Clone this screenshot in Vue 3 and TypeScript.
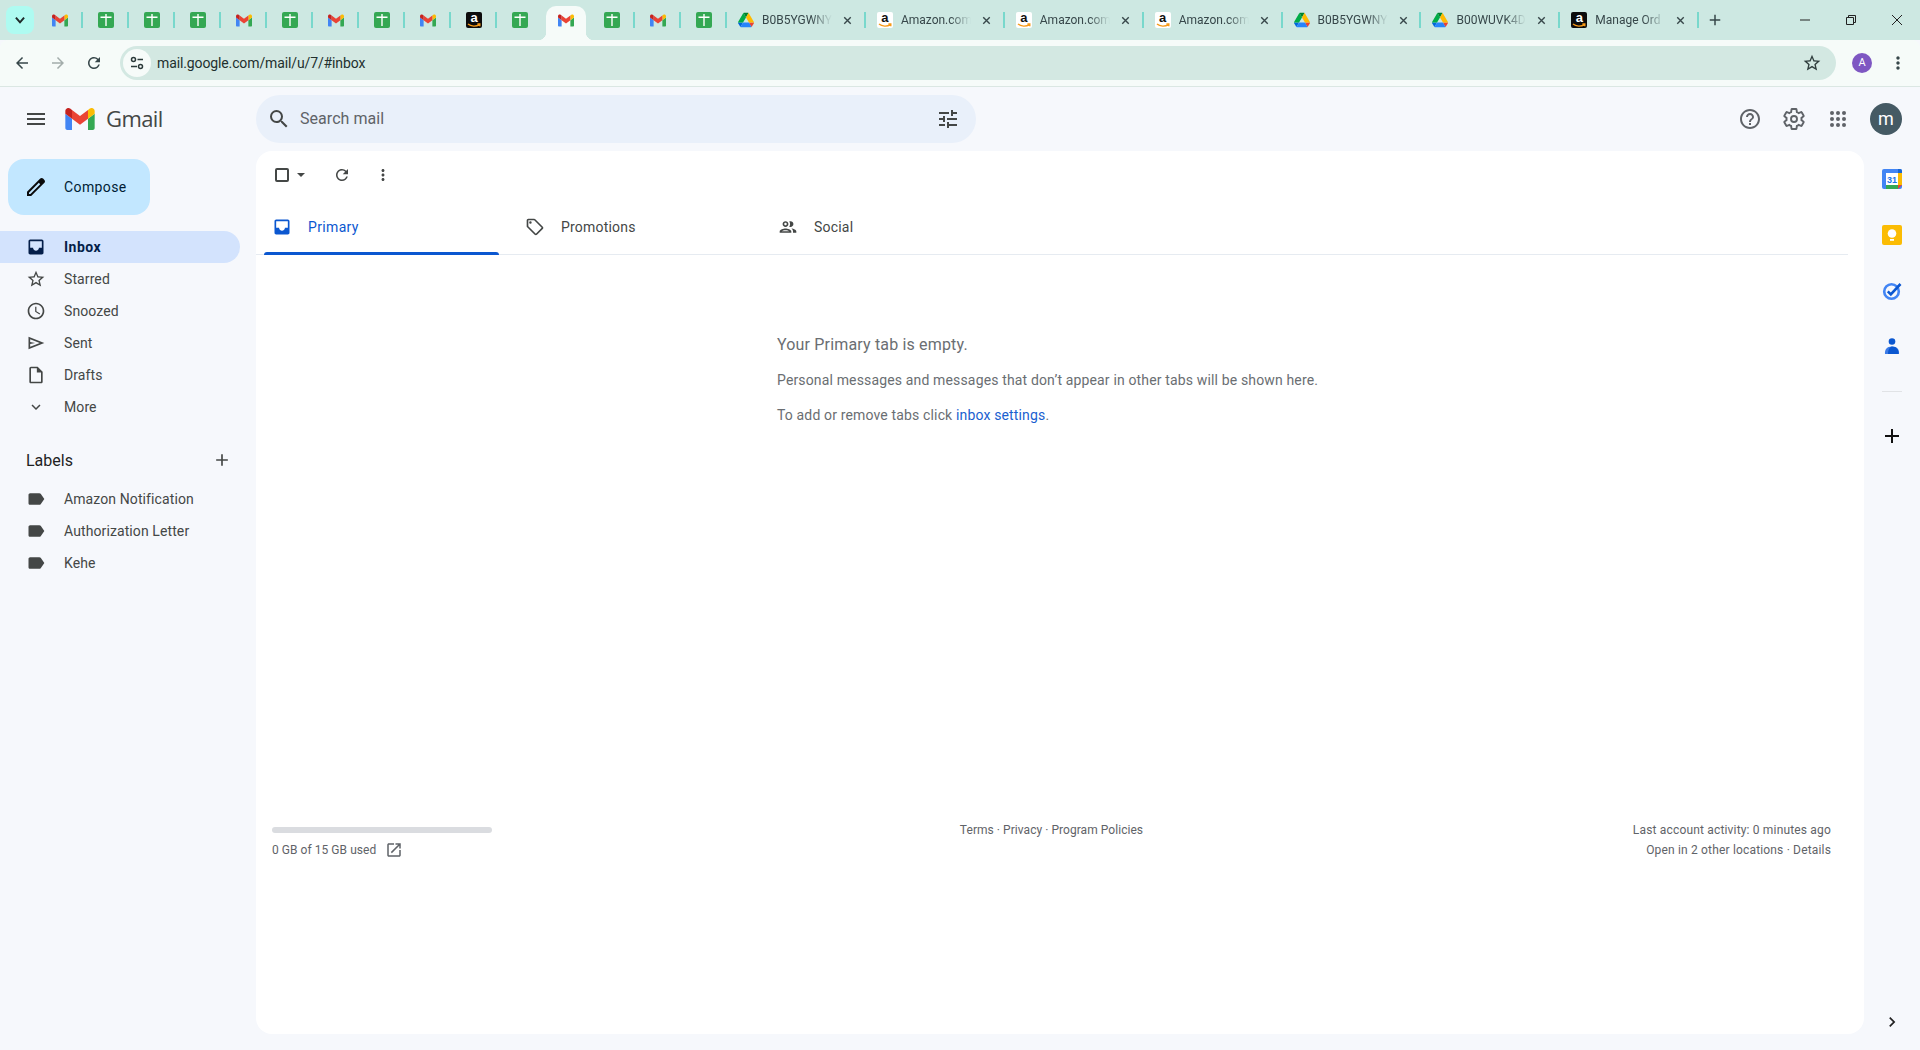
<script setup lang="ts">
interface TabItem {
  kind: string
  title?: string
  active?: boolean
}

const smallTabs: TabItem[] = [
  { kind: 'gmail' }, { kind: 'sheets' }, { kind: 'sheets' }, { kind: 'sheets' }, { kind: 'gmail' },
  { kind: 'sheets' }, { kind: 'gmail' }, { kind: 'sheets' }, { kind: 'gmail' }, { kind: 'amazonDark' },
  { kind: 'sheets' }, { kind: 'gmail', active: true }, { kind: 'sheets' }, { kind: 'gmail' }, { kind: 'sheets' },
]
const wideTabs: TabItem[] = [
  { kind: 'drive', title: 'B0B5YGWNY' },
  { kind: 'amazonLight', title: 'Amazon.com' },
  { kind: 'amazonLight', title: 'Amazon.com' },
  { kind: 'amazonLight', title: 'Amazon.com' },
  { kind: 'drive', title: 'B0B5YGWNY' },
  { kind: 'drive', title: 'B00WUVK4D' },
  { kind: 'amazonDark', title: 'Manage Ord' },
]

const inboxPath = 'M19 3H5c-1.1 0-2 .9-2 2v14c0 1.1.9 2 2 2h14c1.1 0 2-.9 2-2V5c0-1.1-.9-2-2-2zm0 10h-3.500c0 2-1.600 3.500-3.500 3.500s-3.500-1.500-3.500-3.500H5V5h14z'

const navItems = [
  { label: 'Inbox', active: true, path: inboxPath },
  { label: 'Starred', path: 'M22 9.24l-7.19-.62L12 2 9.19 8.63 2 9.24l5.46 4.73L5.82 21 12 17.27 18.18 21l-1.63-7.03L22 9.24zM12 15.4l-3.76 2.27 1-4.28-3.32-2.88 4.38-.38L12 6.1l1.71 4.04 4.38.38-3.32 2.88 1 4.28L12 15.4z' },
  { label: 'Snoozed', path: 'M11.99 2C6.47 2 2 6.48 2 12s4.47 10 9.99 10C17.52 22 22 17.52 22 12S17.52 2 11.99 2zM12 20c-4.42 0-8-3.58-8-8s3.58-8 8-8 8 3.58 8 8-3.58 8-8 8zm.5-13H11v6l5.25 3.15.75-1.23-4.5-2.67V7z' },
  { label: 'Sent', path: 'M3 4.5v15L22 12 3 4.5zm2 3l11.5 4.5L5 16.5v-3.2l6-1.3-6-1.3V7.5z' },
  { label: 'Drafts', path: 'M14 2H6c-1.1 0-2 .9-2 2v16c0 1.1.9 2 2 2h12c1.1 0 2-.9 2-2V8l-6-6zm4 18H6V4h7v5h5v11z' },
  { label: 'More', path: 'M7.41 8.59L12 13.17l4.59-4.58L18 10l-6 6-6-6 1.41-1.41z' },
]
const labels = ['Amazon Notification', 'Authorization Letter', 'Kehe']

const gearPath = 'M19.43 12.98c.04-.32.07-.64.07-.98s-.03-.66-.07-.98l2.11-1.65c.19-.15.24-.42.12-.64l-2-3.46c-.12-.22-.39-.3-.61-.22l-2.49 1c-.52-.4-1.08-.73-1.69-.98l-.38-2.65C14.46 2.18 14.25 2 14 2h-4c-.25 0-.46.18-.49.42l-.38 2.65c-.61.25-1.17.59-1.69.98l-2.49-1c-.23-.09-.49 0-.61.22l-2 3.46c-.13.22-.07.49.12.64l2.11 1.65c-.04.32-.07.65-.07.98s.03.66.07.98l-2.11 1.65c-.19.15-.24.42-.12.64l2 3.46c.12.22.39.3.61.22l2.49-1c.52.4 1.08.73 1.69.98l.38 2.65c.03.24.24.42.49.42h4c.25 0 .46-.18.49-.42l.38-2.65c.61-.25 1.17-.59 1.69-.98l2.49 1c.23.09.49 0 .61-.22l2-3.46c.12-.22.07-.49-.12-.64l-2.11-1.65z'
const helpPath = 'M11 18h2v-2h-2v2zm1-16C6.48 2 2 6.48 2 12s4.48 10 10 10 10-4.48 10-10S17.52 2 12 2zm0 18c-4.41 0-8-3.59-8-8s3.59-8 8-8 8 3.59 8 8-3.59 8-8 8zm0-14c-2.21 0-4 1.79-4 4h2c0-1.1.9-2 2-2s2 .9 2 2c0 2-3 1.75-3 5h2c0-2.25 3-2.5 3-5 0-2.21-1.79-4-4-4z'
const gridDots = [6, 12, 18].flatMap((y) => [6, 12, 18].map((x) => ({ x, y })))

const mailTabs = [
  { label: 'Primary', active: true, path: inboxPath },
  { label: 'Promotions', path: 'M21.41 11.58l-9-9C12.05 2.22 11.55 2 11 2H4c-1.1 0-2 .9-2 2v7c0 .55.22 1.05.59 1.42l9 9c.36.36.86.58 1.41.58s1.05-.22 1.41-.59l7-7c.37-.36.59-.86.59-1.41s-.23-1.06-.59-1.42zM13 20.01L4 11V4h7v-.01l9 9-7 7.02zM6.5 5A1.5 1.5 0 1 0 6.5 8 1.5 1.5 0 0 0 6.5 5z' },
  { label: 'Social', path: 'M9 13.75c-2.34 0-7 1.17-7 3.5V19h14v-1.75c0-2.33-4.66-3.5-7-3.5zM4.34 17c.84-.58 2.87-1.25 4.66-1.25s3.82.67 4.66 1.25H4.34zM9 12c1.93 0 3.5-1.57 3.5-3.5S10.93 5 9 5 5.5 6.57 5.5 8.5 7.07 12 9 12zm0-5c.83 0 1.5.67 1.5 1.5S9.83 10 9 10s-1.5-.67-1.5-1.5S8.17 7 9 7zm7.04 6.81c1.16.84 1.96 1.96 1.96 3.44V19h4v-1.75c0-2.02-3.5-3.17-5.96-3.44zM15 12c1.93 0 3.5-1.57 3.5-3.5S16.93 5 15 5c-.54 0-1.04.13-1.5.35.63.89 1 1.98 1 3.15s-.37 2.26-1 3.15c.46.22.96.35 1.5.35z' },
]

const refreshPath = 'M17.65 6.35A7.958 7.958 0 0 0 12 4c-4.42 0-7.99 3.58-7.99 8s3.57 8 7.99 8c3.73 0 6.84-2.55 7.73-6h-2.08A5.99 5.99 0 0 1 12 18c-3.31 0-6-2.69-6-6s2.69-6 6-6c1.66 0 3.14.69 4.22 1.78L13 11h7V4l-2.35 2.35z'
const dotsPath = 'M12 8c1.1 0 2-.9 2-2s-.9-2-2-2-2 .9-2 2 .9 2 2 2zm0 2c-1.1 0-2 .9-2 2s.9 2 2 2 2-.9 2-2-.9-2-2-2zm0 6c-1.1 0-2 .9-2 2s.9 2 2 2 2-.9 2-2-.9-2-2-2z'
const plusPath = 'M19 13h-6v6h-2v-6H5v-2h6V5h2v6h6v2z'
</script>

<template>
  <div class="page">
    <header class="strip">
      <button class="collapse" aria-label="Search tabs">
        <svg width="14" height="14" viewBox="0 0 24 24"><path d="M5 8l7 8 7-8" fill="none" stroke="#1f2a2a" stroke-width="3.4" /></svg>
      </button>
      <div class="tabs">
        <div v-for="(t, i) in [...smallTabs, ...wideTabs]" :key="i" class="tab" :class="{ wide: t.title, active: t.active }">
          <svg v-if="t.kind === 'gmail'" class="fav gm" viewBox="52 42 88 66">
            <path fill="#4285f4" d="M58 108h14V74L52 59v43c0 3.32 2.69 6 6 6" />
            <path fill="#34a853" d="M120 108h14c3.32 0 6-2.69 6-6V59l-20 15" />
            <path fill="#fbbc04" d="M120 48v26l20-15v-8c0-7.42-8.47-11.65-14.4-7.2" />
            <path fill="#ea4335" d="M72 74V48l24 18 24-18v26L96 92" />
            <path fill="#c5221f" d="M52 51v8l20 15V48l-5.6-4.2c-5.94-4.45-14.4-.22-14.4 7.2" />
          </svg>
          <svg v-else-if="t.kind === 'sheets'" class="fav" viewBox="0 0 16 16">
            <rect width="16" height="16" rx="2" fill="#34a853" />
            <path d="M7.3 2h1.400v2.600h4.800V6H8.700v8H7.300V6H2.500V4.600h4.800z" fill="#fff" />
          </svg>
          <svg v-else-if="t.kind === 'drive'" class="fav" viewBox="0 0 87.3 78">
            <path fill="#0066da" d="m6.6 66.85 3.85 6.65c.8 1.4 1.95 2.5 3.3 3.3l13.75-23.8h-27.5c0 1.55.4 3.1 1.2 4.5z" />
            <path fill="#00ac47" d="m43.65 25-13.75-23.8c-1.35.8-2.5 1.9-3.3 3.3l-25.4 44a9.06 9.06 0 0 0 -1.2 4.5h27.5z" />
            <path fill="#ea4335" d="m73.55 76.8c1.35-.8 2.5-1.9 3.3-3.3l1.6-2.75 7.65-13.25c.8-1.4 1.2-2.95 1.2-4.5h-27.502l5.852 11.5z" />
            <path fill="#00832d" d="m43.65 25 13.75-23.8c-1.35-.8-2.9-1.2-4.5-1.2h-18.5c-1.6 0-3.15.45-4.5 1.2z" />
            <path fill="#2684fc" d="m59.8 53h-32.3l-13.75 23.8c1.35.8 2.9 1.2 4.5 1.2h50.8c1.6 0 3.15-.45 4.5-1.2z" />
            <path fill="#ffba00" d="m73.4 26.5-12.7-22c-.8-1.4-1.95-2.5-3.3-3.3l-13.75 23.8 16.15 28h27.45c0-1.55-.4-3.1-1.2-4.5z" />
          </svg>
          <span v-else class="amz" :class="t.kind">
            <span class="amz-a">a</span>
            <svg class="smile" viewBox="0 0 14 5"><path d="M1 1c3 2.6 8 2.8 11.5.6M10.4 1h2.4v2.2" fill="none" stroke="#f79a17" stroke-width="1.4" /></svg>
          </span>
          <template v-if="t.title">
            <span class="tab-title">{{ t.title }}</span>
            <svg class="tab-x" viewBox="0 0 24 24"><path d="M6 6l12 12M18 6L6 18" stroke="#37474a" stroke-width="2.6" /></svg>
          </template>
        </div>
      </div>
      <svg class="newtab" viewBox="0 0 24 24"><path :d="plusPath" fill="#37474a" /></svg>
      <div class="winctl">
        <svg viewBox="0 0 12 12"><path d="M1 6h10" stroke="#222" stroke-width="1" /></svg>
        <svg viewBox="0 0 12 12"><path d="M1.5 3.500h7v7h-7zM3.500 3.500v-2h7v7h-2" fill="none" stroke="#222" stroke-width="1" /></svg>
        <svg viewBox="0 0 12 12"><path d="M1 1l10 10M11 1L1 11" stroke="#222" stroke-width="1" /></svg>
      </div>
    </header>

    <nav class="toolbar">
      <svg class="tb-ic back" viewBox="0 0 24 24"><path d="M20 11H7.83l5.59-5.59L12 4l-8 8 8 8 1.41-1.41L7.83 13H20v-2z" fill="#37474a" /></svg>
      <svg class="tb-ic fwd" viewBox="0 0 24 24"><path d="M12 4l-1.41 1.41L16.17 11H4v2h12.17l-5.58 5.59L12 20l8-8z" fill="#a3adab" /></svg>
      <svg class="tb-ic reload" viewBox="0 0 24 24"><path :d="refreshPath" fill="#37474a" /></svg>
      <div class="omni">
        <span class="site">
          <svg viewBox="0 0 16 16" width="16" height="16">
            <circle cx="4.500" cy="4.500" r="2" fill="none" stroke="#2b3a3a" stroke-width="1.500" />
            <path d="M8.500 4.500H14M2 11.500h6" stroke="#2b3a3a" stroke-width="1.500" />
            <circle cx="11.500" cy="11.500" r="2" fill="none" stroke="#2b3a3a" stroke-width="1.500" />
          </svg>
        </span>
        <span class="url">mail.google.com/mail/u/7/#inbox</span>
        <svg class="star" viewBox="0 0 24 24"><path :d="navItems[1].path" fill="#2f3d3d" /></svg>
      </div>
      <span class="profile">A</span>
      <svg class="chrome-menu" viewBox="0 0 24 24"><path :d="dotsPath" fill="#37474a" /></svg>
    </nav>

    <div class="gmail">
      <div class="g-head">
        <div class="brand">
          <svg class="ham" viewBox="0 0 24 24"><path d="M3 18h18v-2H3v2zm0-5h18v-2H3v2zm0-7v2h18V6H3z" fill="#444746" /></svg>
          <svg class="logo" viewBox="52 42 88 66">
            <path fill="#4285f4" d="M58 108h14V74L52 59v43c0 3.32 2.69 6 6 6" />
            <path fill="#34a853" d="M120 108h14c3.32 0 6-2.69 6-6V59l-20 15" />
            <path fill="#fbbc04" d="M120 48v26l20-15v-8c0-7.42-8.47-11.65-14.4-7.2" />
            <path fill="#ea4335" d="M72 74V48l24 18 24-18v26L96 92" />
            <path fill="#c5221f" d="M52 51v8l20 15V48l-5.6-4.2c-5.94-4.45-14.4-.22-14.4 7.2" />
          </svg>
          <span class="wordmark">Gmail</span>
        </div>
        <div class="search">
          <svg class="s-ic" viewBox="0 0 24 24"><path d="M15.5 14h-.79l-.28-.27A6.471 6.471 0 0 0 16 9.5 6.5 6.5 0 1 0 9.5 16c1.61 0 3.09-.59 4.23-1.57l.27.28v.79l5 4.99L20.49 19l-4.99-5zm-6 0C7.01 14 5 11.99 5 9.5S7.01 5 9.5 5 14 7.01 14 9.5 11.99 14 9.5 14z" fill="#444746" /></svg>
          <span class="s-text">Search mail</span>
          <svg class="s-tune" viewBox="0 0 24 24"><path d="M3 17v2h6v-2H3zM3 5v2h10V5H3zm10 16v-2h8v-2h-8v-2h-2v6h2zM7 9v2H3v2h4v2h2V9H7zm14 4v-2H11v2h10zm-6-4h2V7h4V5h-4V3h-2v6z" fill="#444746" /></svg>
        </div>
        <div class="h-actions">
          <svg class="h-ic" viewBox="0 0 24 24"><path :d="helpPath" fill="#5f6368" /></svg>
          <svg class="h-ic" viewBox="0 0 24 24">
            <path :d="gearPath" fill="none" stroke="#5f6368" stroke-width="1.900" />
            <circle cx="12" cy="12" r="3" fill="none" stroke="#5f6368" stroke-width="1.900" />
          </svg>
          <svg class="h-ic" viewBox="0 0 24 24"><circle v-for="d in gridDots" :key="`${d.x}-${d.y}`" :cx="d.x" :cy="d.y" r="2" fill="#5f6368" /></svg>
          <span class="me">m</span>
        </div>
      </div>

      <div class="g-body">
        <aside class="side">
          <button class="compose">
            <svg viewBox="0 0 24 24" width="24" height="24"><path d="M20.41 4.94l-1.35-1.35c-.78-.78-2.05-.78-2.83 0L3 16.82V21h4.18L20.41 7.77c.79-.78.79-2.05 0-2.83zM6.41 19.06L5 19v-1.36l9.82-9.82 1.41 1.41-9.82 9.83z" fill="#0b0b0b" /></svg>
            <span>Compose</span>
          </button>
          <ul class="nav">
            <li v-for="n in navItems" :key="n.label" class="row" :class="{ on: n.active }">
              <svg viewBox="0 0 24 24" class="row-ic" :class="{ small: n.label === 'More' }"><path :d="n.path" :fill="n.active ? '#041e49' : '#444746'" /></svg>
              <span>{{ n.label }}</span>
            </li>
          </ul>
          <div class="lab-head">
            <span>Labels</span>
            <svg viewBox="0 0 24 24" width="20" height="20"><path :d="plusPath" fill="#444746" /></svg>
          </div>
          <ul class="nav">
            <li v-for="l in labels" :key="l" class="row">
              <svg viewBox="0 0 24 24" class="row-ic"><path d="M17.63 5.84C17.27 5.33 16.67 5 16 5L5 5.01C3.9 5.01 3 5.9 3 7v10c0 1.1.9 1.99 2 1.99L16 19c.67 0 1.27-.33 1.63-.84L22 12l-4.37-6.16z" fill="#444746" /></svg>
              <span>{{ l }}</span>
            </li>
          </ul>
        </aside>

        <main class="card">
          <div class="actions">
            <span class="check"></span>
            <svg class="caret" viewBox="0 0 10 5"><path d="M0 0h10L5 5z" fill="#444746" /></svg>
            <svg class="act refresh" viewBox="0 0 24 24"><path :d="refreshPath" fill="#444746" /></svg>
            <svg class="act more" viewBox="0 0 24 24"><path :d="dotsPath" fill="#444746" /></svg>
          </div>
          <div class="mtabs">
            <div v-for="t in mailTabs" :key="t.label" class="mtab" :class="{ on: t.active }">
              <svg viewBox="0 0 24 24" class="mtab-ic"><path :d="t.path" :fill="t.active ? '#0b57d0' : '#444746'" /></svg>
              <span>{{ t.label }}</span>
            </div>
          </div>
          <section class="empty">
            <h2>Your Primary tab is empty.</h2>
            <p>Personal messages and messages that don’t appear in other tabs will be shown here.</p>
            <p>To add or remove tabs click <a>inbox settings</a>.</p>
          </section>
          <footer class="foot">
            <div class="usage">
              <div class="bar"></div>
              <div class="used">
                <span>0 GB of 15 GB used</span>
                <svg viewBox="0 0 24 24" width="18" height="18"><path d="M19 19H5V5h7V3H5c-1.11 0-2 .9-2 2v14c0 1.1.89 2 2 2h14c1.1 0 2-.9 2-2v-7h-2v7zM14 3v2h3.59l-9.83 9.83 1.41 1.41L19 6.41V10h2V3h-7z" fill="#5f6368" /></svg>
              </div>
            </div>
            <div class="links">Terms · Privacy · Program Policies</div>
            <div class="activity">
              <div>Last account activity: 0 minutes ago</div>
              <div>Open in 2 other locations · Details</div>
            </div>
          </footer>
        </main>

        <aside class="rail">
          <div class="rail-top">
            <svg class="rail-ic" viewBox="0 0 20 20">
              <rect width="20" height="20" rx="2" fill="#4285f4" />
              <rect x="4" y="4" width="12" height="12" fill="#fff" />
              <path d="M16 4h4v12h-4z" fill="#fbbc04" />
              <path d="M4 16h12v4H4z" fill="#34a853" />
              <path d="M16 16h4l-4 4z" fill="#ea4335" />
              <path d="M16 0h2a2 2 0 0 1 2 2v2h-4z" fill="#1967d2" />
              <text x="10" y="13.500" class="cal-num">31</text>
            </svg>
            <svg class="rail-ic" viewBox="0 0 20 20">
              <rect width="20" height="20" rx="2" fill="#fbbc04" />
              <circle cx="10" cy="8.500" r="4.300" fill="#fff" />
              <rect x="8" y="14" width="4" height="1.800" fill="#fff" />
            </svg>
            <svg class="rail-ic" viewBox="0 0 20 20">
              <circle cx="9.500" cy="10.500" r="7.300" fill="none" stroke="#4285f4" stroke-width="2.600" />
              <path d="M5.800 10.400l3 3L18.500 3" fill="none" stroke="#0b57d0" stroke-width="2.600" />
            </svg>
            <svg class="rail-ic" viewBox="0 0 20 20">
              <circle cx="10" cy="4.500" r="3.300" fill="#0b57d0" />
              <path d="M3 17c-.500-4 1.500-7.500 7-7.500s7.500 3.500 7 7.500z" fill="#3c7be6" />
              <path d="M6 17c0-4 1.500-7 4-7.500 4.500 0 7 3.500 6.500 7.500z" fill="#0b57d0" />
            </svg>
            <div class="rail-sep"></div>
            <svg class="rail-plus" viewBox="0 0 24 24"><path :d="plusPath" fill="#111" /></svg>
          </div>
          <svg class="rail-chev" viewBox="0 0 24 24"><path d="M8.590 16.590L13.170 12 8.590 7.410 10 6l6 6-6 6z" fill="#222" /></svg>
        </aside>
      </div>
    </div>
  </div>
</template>

<style>
html, body { margin: 0; background: #f6f8fc; }
</style>

<style scoped>
.page {
  width: 1920px;
  height: 1050px;
  overflow: hidden;
  display: flex;
  flex-direction: column;
  font-family: Roboto, "Liberation Sans", sans-serif;
  color: #444746;
  background: #f6f8fc;
}
svg { display: block; flex: none; }
ul { list-style: none; margin: 0; padding: 0; }
button { border: 0; font: inherit; padding: 0; }

/* tab strip */
.strip { height: 40px; flex: none; background: #cde8e2; display: flex; align-items: flex-start; position: relative; }
.collapse { width: 28px; height: 28px; margin: 6px 3px 0 6px; border-radius: 8px; background: #aefbf1; display: flex; align-items: center; justify-content: center; }
.tabs { display: flex; height: 40px; }
.tab { width: 46px; height: 40px; box-sizing: border-box; display: flex; align-items: center; justify-content: center; position: relative; }
.tab::after { content: ""; position: absolute; right: 0; top: 12px; height: 16px; width: 2px; background: #78d8cc; }
.tab:nth-child(11)::after { display: none; }
.tab.active::before {
  content: "";
  position: absolute;
  left: 3px;
  right: 3px;
  top: 6px;
  bottom: 0;
  background: #f6fbf9;
  border-radius: 10px 10px 0 0;
}
.tab.active::after {
  left: -5px;
  right: -5px;
  top: auto;
  bottom: 0;
  width: auto;
  height: 8px;
  background:
    radial-gradient(circle at 0 0, transparent 8px, #f6fbf9 8.5px) left / 8px 8px no-repeat,
    radial-gradient(circle at 100% 0, transparent 8px, #f6fbf9 8.5px) right / 8px 8px no-repeat;
}
.tab.wide { width: 138.900px; justify-content: flex-start; padding-left: 11px; }
.fav { width: 16px; height: 16px; position: relative; z-index: 1; }
.fav.gm { height: 13px; }
.amz { width: 16px; height: 16px; position: relative; display: block; border-radius: 2px; }
.amazonDark { background: #0c0c0c; color: #fff; }
.amazonLight { background: #fff; color: #111; }
.amz-a { position: absolute; left: 0; right: 0; top: 0; text-align: center; font: 700 13px/12px "Liberation Sans", sans-serif; }
.smile { position: absolute; left: 1px; bottom: 0; width: 14px; height: 5px; }
.tab-title {
  margin-left: 8px;
  width: 70px;
  font-size: 12px;
  white-space: nowrap;
  color: #37474a;
  -webkit-mask-image: linear-gradient(90deg, #000 70%, transparent);
  mask-image: linear-gradient(90deg, #000 70%, transparent);
}
.tab-x { width: 13px; height: 13px; margin-left: 9px; }
.newtab { width: 18px; height: 18px; margin: 11px 0 0 7px; }
.winctl { margin-left: auto; display: flex; gap: 34px; padding: 14px 17px 0 0; }
.winctl svg { width: 12px; height: 12px; }

/* toolbar */
.toolbar { height: 47px; flex: none; box-sizing: border-box; background: #f6fbf9; border-bottom: 1px solid #dbe7e3; border-radius: 8px 8px 0 0; display: flex; align-items: center; padding: 0 0 1px 13px; }
.tb-ic { width: 18px; height: 18px; }
.fwd { margin-left: 18px; }
.reload { margin-left: 18px; }
.omni { width: 1716px; height: 34px; margin-left: 17px; border-radius: 17px; background: #d3e8e2; display: flex; align-items: center; box-sizing: border-box; padding: 0 14px 0 3px; }
.site { width: 28px; height: 28px; border-radius: 50%; background: #f6fbf9; display: flex; align-items: center; justify-content: center; }
.url { margin-left: 6px; font-size: 14px; letter-spacing: -.12px; color: #22302e; }
.star { width: 20px; height: 20px; margin-left: auto; }
.profile { width: 20px; height: 20px; margin-left: 16px; border-radius: 50%; background: #7e57c2; color: #fff; font-size: 11px; line-height: 20px; text-align: center; }
.chrome-menu { width: 20px; height: 20px; margin-left: 16px; }

/* gmail head */
.gmail { flex: 1; display: flex; flex-direction: column; min-height: 0; }
.g-head { height: 64px; flex: none; display: flex; align-items: center; }
.brand { width: 256px; flex: none; display: flex; align-items: center; padding-left: 24px; box-sizing: border-box; }
.ham { width: 24px; height: 24px; }
.logo { width: 30px; height: 22px; margin-left: 17px; }
.wordmark { margin: -2px 0 0 11px; font: 400 22px/26px "Open Sans", Roboto, sans-serif; letter-spacing: -.6px; color: #444746; }
.search { width: 720px; height: 48px; border-radius: 24px; background: #e9f0fa; display: flex; align-items: center; box-sizing: border-box; padding: 0 16px 0 11px; }
.s-ic { width: 24px; height: 24px; }
.s-text { margin: -1px 0 0 9px; font-size: 16px; letter-spacing: .05px; color: #5f6368; }
.s-tune { width: 24px; height: 24px; margin-left: auto; }
.h-actions { margin-left: auto; display: flex; align-items: center; gap: 20px; padding-right: 18px; }
.h-ic { width: 24px; height: 24px; }
.me { width: 32px; height: 32px; border-radius: 50%; background: #455a64; color: #fff; font-size: 18px; line-height: 31px; text-align: center; }

/* sidebar */
.g-body { flex: 1; display: flex; min-height: 0; padding-bottom: 16px; }
.side { width: 256px; flex: none; box-sizing: border-box; padding: 8px 16px 0 0; }
.compose { width: 142px; height: 56px; margin-left: 8px; border-radius: 16px; background: #c2e7ff; display: flex; align-items: center; padding-left: 16px; box-sizing: border-box; color: #001d35; font-size: 14px; font-weight: 400; letter-spacing: .4px; }
.compose span { margin-left: 16px; }
.compose + .nav { margin-top: 16px; }
.row { height: 32px; width: 240px; display: flex; align-items: center; box-sizing: border-box; padding-left: 26px; font-size: 14px; letter-spacing: .1px; color: #444746; }
.row.on { background: #d3e3fd; border-radius: 0 16px 16px 0; color: #041e49; font-weight: 700; letter-spacing: .5px; }
.row-ic { width: 20px; height: 20px; margin-right: 18px; }
.row-ic.small { transform: scale(.9); }
.lab-head { width: 240px; box-sizing: border-box; height: 32px; margin-top: 21px; margin-bottom: 7px; padding: 0 8px 0 26px; display: flex; align-items: center; justify-content: space-between; font-size: 16px; color: #1f1f1f; }

/* main card */
.card { width: 1608px; flex: none; background: #fff; border-radius: 16px; display: flex; flex-direction: column; box-sizing: border-box; }
.actions { height: 48px; display: flex; align-items: center; padding-left: 19px; }
.check { width: 10px; height: 10px; border: 2px solid #444746; border-radius: 2px; }
.caret { width: 8px; height: 4px; margin-left: 8px; }
.act { width: 18px; height: 18px; }
.refresh { margin-left: 28px; }
.more { margin-left: 23px; }
.mtabs { display: flex; gap: 18px; margin-top: 8px; height: 48px; width: 1592px; box-sizing: border-box; padding-left: 8px; border-bottom: 1px solid #e6ebf1; }
.mtab { width: 235px; height: 48px; display: flex; align-items: center; box-sizing: border-box; padding: 0 0 8px 8px; font-size: 14px; letter-spacing: .2px; color: #444746; position: relative; }
.mtab.on { color: #0b57d0; font-weight: 400; letter-spacing: .35px; }
.mtab.on::after { content: ""; position: absolute; left: 0; right: 0; bottom: 0; height: 3px; background: #0b57d0; border-radius: 3px 3px 0 0; }
.mtab-ic { width: 20px; height: 20px; margin-right: 16px; }

.empty { margin: 0 0 0 521px; padding-top: 79px; color: #6a6e72; flex: 1; }
.empty h2 { margin: 0 0 14px; font-size: 16px; font-weight: 400; line-height: 22px; letter-spacing: .17px; }
.empty p { margin: 0 0 15px; font-size: 14px; line-height: 20px; letter-spacing: .15px; }
.empty a { color: #1a5fd0; }

.foot { height: 207px; flex: none; display: grid; grid-template-columns: 1fr 1fr 1fr; box-sizing: border-box; padding: 0 33px 0 16px; font-size: 12px; letter-spacing: .05px; color: #5f6368; }
.usage { width: 220px; }
.bar { height: 6px; border-radius: 3px; background: #dadce0; margin-bottom: 8px; }
.used { display: flex; align-items: center; gap: 9px; }
.links { text-align: center; line-height: 14px; margin-top: -4px; }
.activity { text-align: right; line-height: 20px; margin-top: -7px; letter-spacing: .17px; }

/* right rail */
.rail { flex: 1; display: flex; flex-direction: column; align-items: center; justify-content: space-between; }
.rail-top { display: flex; flex-direction: column; align-items: center; gap: 36px; padding-top: 18px; }
.rail-ic { width: 20px; height: 20px; }
.rail-sep { width: 20px; height: 1px; background: #e1e3e6; margin: -2px 0 -1px; }
.rail-plus { width: 24px; height: 24px; margin-top: -3px; }
.rail-chev { width: 20px; height: 20px; margin-bottom: 2px; }
.cal-num { font: 700 9px "Liberation Sans", sans-serif; text-anchor: middle; fill: #1a73e8; }
</style>
